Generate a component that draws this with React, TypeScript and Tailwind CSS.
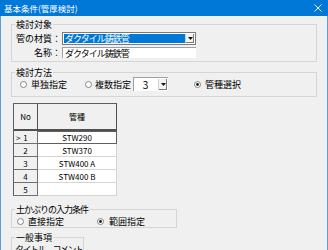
import React from "react";

const Radio = ({ checked }: { checked?: boolean }) => (
  <svg width="7" height="7" viewBox="0 0 7 7" className="shrink-0">
    <circle cx="3.5" cy="3.5" r="3" fill="#ffffff" stroke="#6a6a6a" strokeWidth="0.8" />
    {checked && <circle cx="3.5" cy="3.5" r="1.4" fill="#1a1a1a" />}
  </svg>
);

const DropBtn = () => (
  <div className="w-[9px] h-full bg-[#f4f4f4] border-l border-[#d0d0d0] flex items-center justify-center shadow-[inset_-1px_-1px_0_#7a7a7a]">
    <svg width="5" height="3" viewBox="0 0 5 3">
      <path d="M0 0H5L2.5 3Z" fill="#111" />
    </svg>
  </div>
);

const rows = [
  { no: "1", name: "STW290", current: true },
  { no: "2", name: "STW370" },
  { no: "3", name: "STW400 A" },
  { no: "4", name: "STW400 B" },
  { no: "5", name: "" },
];

export default function App() {
  return (
    <div className="w-[328px] h-[250px] overflow-hidden bg-[#f0f0f0] flex flex-col font-['Noto_Sans_CJK_JP',sans-serif] text-[9px] leading-[9px] text-black">
      <div className="h-[16px] shrink-0 bg-[#0078d7] flex items-center justify-between pl-[4px] pr-[6px] text-white text-[8.5px]">
        <span>基本条件(管厚検討)</span>
        <svg width="8" height="8" viewBox="0 0 8 8">
          <path d="M0.5 0.5L7.5 7.5M7.5 0.5L0.5 7.5" stroke="#ffffff" strokeWidth="0.9" />
        </svg>
      </div>
      <div className="flex-1 border-x border-[#5b9fd9] flex flex-col items-start pl-[10px]">
        {/* 検討対象 */}
        <fieldset className="mt-[4px] w-[306px] border border-[#d5d5d5] pb-[3px]">
          <legend className="ml-[3px] px-[1px] leading-[9px]">検討対象</legend>
          <div className="mt-[3px] flex items-center h-[13px]">
            <span className="w-[49px] text-right">管の材質：</span>
            <div className="ml-[1px] w-[134px] h-[13px] border border-[#7a7a7a] bg-white flex p-[1px]">
              <div className="flex-1 bg-[#0078d7] text-white flex items-center pl-[1px] tracking-[-1px]">ダクタイル鋳鉄管</div>
              <DropBtn />
            </div>
          </div>
          <div className="mt-[2px] flex items-center h-[11px]">
            <span className="w-[49px] text-right">名称：</span>
            <div className="ml-[1px] w-[134px] h-[11px] bg-white border-t border-l border-[#a0a0a0] flex items-center pl-[2px] tracking-[-1px]">
              ダクタイル鋳鉄管
            </div>
          </div>
        </fieldset>

        {/* 検討方法 */}
        <fieldset className="mt-[6px] w-[306px] border border-[#d5d5d5] pb-[5px]">
          <legend className="ml-[3px] px-[1px] leading-[9px]">検討方法</legend>
          <div className="flex items-center h-[14px] pl-[8px]">
            <div className="w-[65px] flex items-center gap-[4px]">
              <Radio />
              <span>単独指定</span>
            </div>
            <div className="w-[48px] flex items-center gap-[3px]">
              <Radio />
              <span>複数指定</span>
            </div>
            <div className="w-[35px] h-[14px] bg-white border-t border-l border-[#a0a0a0] flex">
              <div className="flex-1 flex items-center justify-center text-[10px]">3</div>
              <div className="p-[1px] h-full">
                <DropBtn />
              </div>
            </div>
            <div className="ml-[26px] flex items-center gap-[4px]">
              <Radio checked />
              <span>管種選択</span>
            </div>
          </div>
        </fieldset>

        {/* table */}
        <div className="mt-[6px] ml-[2px] grid grid-cols-[24px_79px] border-t border-l border-[#606060] text-[8px]">
          <div className="h-[27px] bg-[#f0f0f0] border-r border-b-2 border-[#505050] flex items-center justify-center">No</div>
          <div className="h-[27px] bg-[#f0f0f0] border-r border-b-2 border-[#505050] flex items-center justify-center">管種</div>
          {rows.map((r) => (
            <React.Fragment key={r.no}>
              <div className="h-[13px] bg-[#f0f0f0] border-r border-b border-[#707070] flex items-center justify-center relative">
                {r.current && <span className="absolute left-[2px]">&gt;</span>}
                {r.no}
              </div>
              <div
                className={
                  r.current
                    ? "h-[13px] bg-white border border-[#606060] border-l-0 flex items-center justify-center"
                    : "h-[13px] bg-white border-r border-b border-[#d4d4d4] flex items-center justify-center"
                }
              >
                {r.name}
              </div>
            </React.Fragment>
          ))}
        </div>

        {/* 土かぶりの入力条件 */}
        <fieldset className="mt-[9px] w-[166px] border border-[#d5d5d5] pb-[1px]">
          <legend className="ml-[3px] px-[1px] leading-[9px] tracking-[-1px]">土かぶりの入力条件</legend>
          <div className="mt-[2px] flex items-center h-[10px] pl-[5px]">
            <div className="w-[80px] flex items-center gap-[4px]">
              <Radio />
              <span>直接指定</span>
            </div>
            <div className="flex items-center gap-[5px]">
              <Radio checked />
              <span>範囲指定</span>
            </div>
          </div>
        </fieldset>

        {/* 一般事項 */}
        <fieldset className="mt-[5px] w-[73px] border border-[#d5d5d5] pb-[4px]">
          <legend className="ml-[3px] px-[1px] leading-[9px]">一般事項</legend>
          <div className="mt-[3px] pl-[3px] whitespace-nowrap tracking-[-1.5px]">タイトル、コメント</div>
        </fieldset>
      </div>
    </div>
  );
}
